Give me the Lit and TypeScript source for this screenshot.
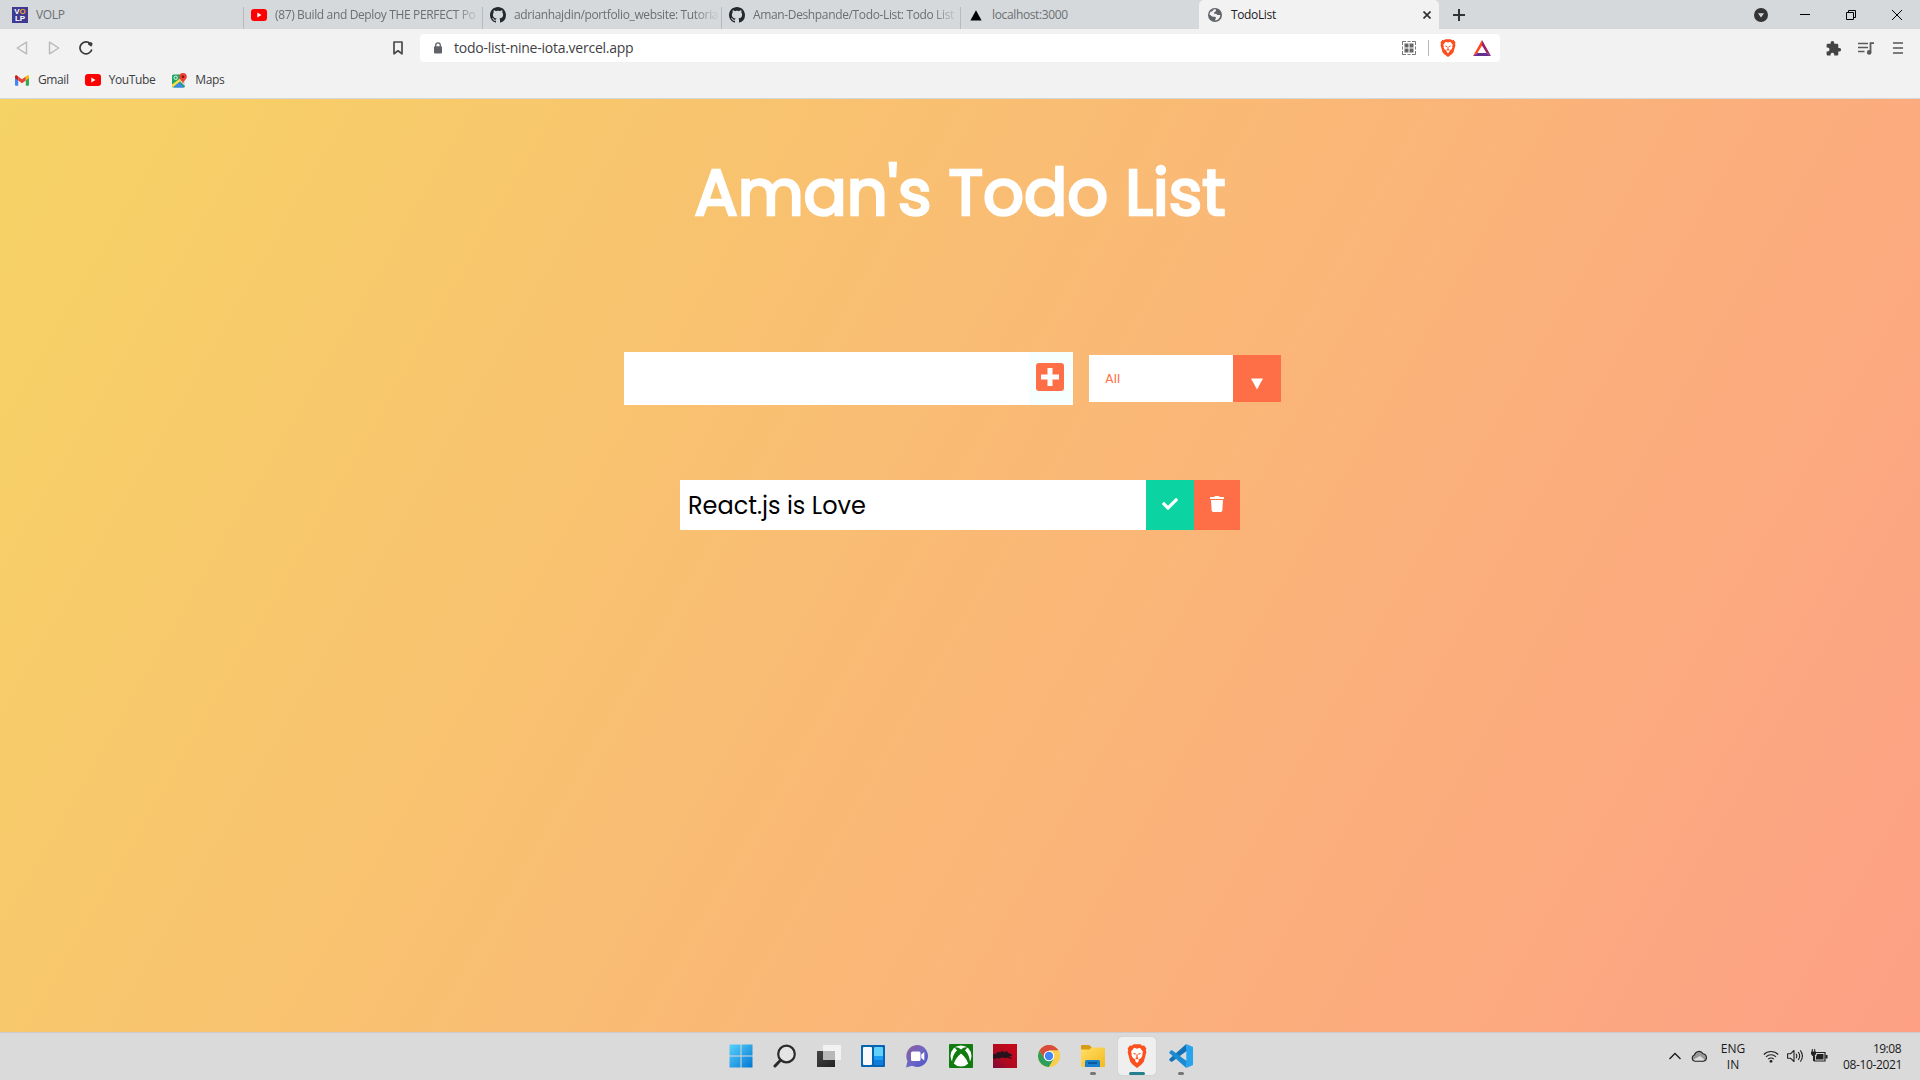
import { LitElement, html, css, svg } from "lit";
import { customElement } from "lit/decorators.js";

const youtube = html`<svg width="16" height="12" viewBox="0 0 16 12"><rect width="16" height="12" rx="3" fill="#f00"/><path d="M6.3 3.6v4.8l4.2-2.4z" fill="#fff"/></svg>`;
const github = html`<svg width="16" height="16" viewBox="0 0 16 16"><path fill="#24292e" d="M8 0C3.58 0 0 3.58 0 8c0 3.54 2.29 6.53 5.47 7.59.4.07.55-.17.55-.38 0-.19-.01-.82-.01-1.49-2.01.37-2.53-.49-2.69-.94-.09-.23-.48-.94-.82-1.13-.28-.15-.68-.52-.01-.53.63-.01 1.08.58 1.23.82.72 1.21 1.87.87 2.33.66.07-.52.28-.87.51-1.07-1.78-.2-3.64-.89-3.64-3.95 0-.87.31-1.59.82-2.15-.08-.2-.36-1.02.08-2.12 0 0 .67-.21 2.2.82.64-.18 1.32-.27 2-.27s1.36.09 2 .27c1.53-1.04 2.2-.82 2.2-.82.44 1.1.16 1.92.08 2.12.51.56.82 1.27.82 2.15 0 3.07-1.87 3.75-3.65 3.95.29.25.54.73.54 1.48 0 1.07-.01 1.93-.01 2.2 0 .21.15.46.55.38A8.01 8.01 0 0 0 16 8c0-4.42-3.58-8-8-8z"/></svg>`;
const volp = html`<span class="volp"><span>V<b>O</b></span><span>LP</span></span>`;
const vercel = html`<svg width="12" height="11" viewBox="0 0 12 11"><path d="M6 .3 11.6 10.6H.4z" fill="#000"/></svg>`;
const globe = html`<svg width="14" height="14" viewBox="0 0 14 14"><circle cx="7" cy="7" r="7" fill="#5f6368"/><path d="M7.600 1.300C8.500 2.200 8 3.200 7.200 3.800L6 4.600v1.200h2.200l1.300 1.300h2.800C12.300 10 10 12.400 7.200 12.600V11.200l1-1.200L7 8.700H4.600L1.500 6.600C1.700 3.800 4.200 1.300 7.600 1.300z" fill="#f2f2f2"/><path d="M2.600 4.200 4.500 3l1.300-1.500L3.600 2.300z" fill="#5f6368"/></svg>`;

const lionHead = svg`<path d="M5.200 1.200h5.600l1.200 1 1.700-.2 1.800 2.200-.5 1.200.5 1.300-2 6.700-1.700 2L8 18l-3.800-2.600-1.700-2L.5 6.700 1 5.400.500 4.200 2.300 2l1.700.2z" fill="#fb4f1f"/>
<path d="M8 4.300l2.300-.6 2.500 2.800-.6 1.500.2.900-1.100 2-2.100 1.100.3 1.100L8 14.500l-1.500-1.400.3-1.100-2.100-1.100-1.100-2 .2-.9-.6-1.500 2.500-2.800z" fill="#fff"/>
<path d="M4.500 7.200l2.600.5-.5 1.100zM11.500 7.200l-2.600.5.5 1.100zM7.500 8.300h1v2.200l1 .4L8 12l-1.500-1.100 1-.4z" fill="#fb4f1f"/>`;
const brave = (w: number, h: number) => html`<svg width=${w} height=${h} viewBox="0 1 16 17" preserveAspectRatio="none">${lionHead}</svg>`;

const gmail = html`<svg width="14" height="11" viewBox="0 0 14 11"><path d="M0 1.500V10a.8.8 0 0 0 .8.8h2.400V4.500z" fill="#4285f4"/><path d="M10.800 4.500v6.300h2.400A.8.8 0 0 0 14 10V1.500z" fill="#34a853"/><path d="M3.200 1.400v4L7 8.300l3.800-2.900v-4L7 4.200z" fill="#ea4335"/><path d="M0 1.500v1.600l3.200 2.400v-4l-.9-.8C1.300 0 0 .5 0 1.500z" fill="#c5221f"/><path d="M14 1.500v1.600l-3.200 2.400v-4l.9-.8c1-.7 2.300-.2 2.300.8z" fill="#fbbc04"/></svg>`;
const maps = html`<svg width="15" height="15" viewBox="0 0 15 15"><rect x="0" y="1.500" width="13" height="13" rx="1.500" fill="#1fa463"/><path d="M0 11.500V13l1 1.300L12.500 4.800V2z" fill="#fddb4c"/><path d="M8 8.600l5 4.500V5.500z" fill="#dadce0"/><path d="M1.600 14.500 7 9.500l5.200 5z" fill="#4285f4"/><circle cx="3.700" cy="4.800" r="1.700" fill="none" stroke="#fff" stroke-width=".9"/><path d="M11 0a3.800 3.800 0 0 0-3.800 3.800C7.200 6.500 10.300 7.200 11 11c.7-3.800 3.800-4.500 3.800-7.200A3.800 3.800 0 0 0 11 0z" fill="#ea4335"/><circle cx="11" cy="3.800" r="1.300" fill="#811411"/></svg>`;

const ic = (w: number, h: number, body: unknown) => html`<svg width=${w} height=${h} viewBox="0 0 ${w} ${h}" fill="none">${body}</svg>`;

@customElement("browser-chrome")
class BrowserChrome extends LitElement {
  static styles = css`
    :host { display: block; height: 99px; background: #f2f2f2; font: 12px/16px "Segoe UI", "Open Sans", "Noto Sans", sans-serif; color: #3c4043; box-sizing: border-box; border-bottom: 1px solid #d3d8db; }
    * { box-sizing: border-box; }
    svg { display: block; flex: none; }
    .tabs { display: flex; height: 29px; background: #d5d9dc; }
    .tab { display: flex; align-items: center; height: 29px; width: 239px; padding: 1px 4px 0 7px; color: #6c6f72; }
    .tab.first { width: 244px; padding-left: 12px; }
    .tab.plain { width: 238px; }
    .tab.line::after { content: ""; width: 1px; height: 22px; align-self: flex-end; background: #b7bbbe; margin-left: 1px; margin-right: -4px; flex: none; }
    .fav { width: 16px; display: flex; justify-content: center; margin-right: 8px; flex: none; }
    .label { flex: 1; white-space: nowrap; letter-spacing: -0.36px; }
    .fade { -webkit-mask-image: linear-gradient(to right, #000 calc(100% - 26px), transparent); mask-image: linear-gradient(to right, #000 calc(100% - 26px), transparent); }
    .tab.active { width: 240px; background: #f2f2f2; border-radius: 5px 5px 0 0; color: #202124; padding: 1px 8px 0; }
    .volp { width: 16px; height: 16px; background: #3d3a8f; color: #fff; font: bold 8px/7px "Liberation Sans", sans-serif; display: flex; flex-direction: column; align-items: center; padding-top: 1px; }
    .volp b { color: #f0a52c; }
    .plus { padding: 9px 0 0 14px; }
    .win { margin-left: auto; display: flex; align-items: center; padding-right: 18px; height: 29px; }
    .bar { display: flex; align-items: center; height: 38px; }
    .bar .nav { display: flex; align-items: center; padding: 0 0 0 16px; gap: 20px; width: 389px; }
    .reload { margin-left: -1px; }
    .url { display: flex; align-items: center; width: 1080px; height: 28px; margin: 0; background: #fff; border-radius: 4px; padding: 0 9px 0 13px; }
    .book { width: 31px; padding-left: 4px; }
    .address { font-size: 14px; margin-left: 11px; flex: 1; letter-spacing: -0.25px; color: #3f4145; }
    .div { width: 1px; height: 16px; background: #b5b5b5; margin: 0 11px 0 12px; }
    .tools { margin-left: auto; display: flex; align-items: center; padding-right: 17px; }
    .marks { display: flex; align-items: center; height: 26px; padding-left: 15px; }
    .mark { display: flex; align-items: center; letter-spacing: -0.38px; }
  `;
  render() {
    const tab = (icon: unknown, text: string, cls = "line", fade = false) => html`<div class="tab ${cls}"><span class="fav">${icon}</span><span class="label ${fade ? "fade" : ""}">${text}</span></div>`;
    return html`
      <div class="tabs">
        ${tab(volp, "VOLP", "first line")}
        ${tab(youtube, "(87) Build and Deploy THE PERFECT Po", "line", true)}
        ${tab(github, "adrianhajdin/portfolio_website: Tutoria", "line", true)}
        ${tab(github, "Aman-Deshpande/Todo-List: Todo List", "line", true)}
        ${tab(vercel, "localhost:3000", "plain")}
        <div class="tab active"><span class="fav">${globe}</span><span class="label">TodoList</span>${ic(8, 8, svg`<path d="M.5.5l7 7m0-7l-7 7" stroke="#333" stroke-width="1.700"/>`)}</div>
        <div class="plus">${ic(12, 12, svg`<path d="M6 0v12M0 6h12" stroke="#333" stroke-width="2"/>`)}</div>
        <div class="win">
          ${ic(14, 14, svg`<circle cx="7" cy="7" r="7" fill="#343434"/><path d="M4 5.200h6L7 9.500z" fill="#d5d9dc"/>`)}
          <span style="width:32px"></span>
          ${ic(10, 10, svg`<path d="M0 4.500h10" stroke="#000"/>`)}
          <span style="width:36px"></span>
          ${ic(10, 10, svg`<path d="M.5 2.500h7v7h-7zM2.500 2.500v-2h7v7h-2" stroke="#000"/>`)}
          <span style="width:36px"></span>
          ${ic(10, 10, svg`<path d="M0 0l10 10M10 0L0 10" stroke="#000"/>`)}
        </div>
      </div>
      <div class="bar">
        <div class="nav">
          ${ic(12, 14, svg`<path d="M10.500 1.200v11.600L1.200 7z" stroke="#b9b9b9" stroke-width="1.400" stroke-linejoin="round"/>`)}
          ${ic(12, 14, svg`<path d="M1.500 1.200v11.600L10.800 7z" stroke="#b9b9b9" stroke-width="1.400" stroke-linejoin="round"/>`)}
          <span class="reload">${ic(14, 14, svg`<path d="M11.200 2.600A6 6 0 1 0 12.800 8.500" stroke="#3b3b3b" stroke-width="1.700"/><path d="M8.800 1.300h3.600l1.300 1.500-1.300 3-3.100-2z" fill="#3b3b3b"/>`)}</span>
        </div>
        <div class="book">${ic(10, 14, svg`<path d="M1 1h8v11.800L5 9.800l-4 3z" stroke="#4a4a4a" stroke-width="1.700" stroke-linejoin="round"/>`)}</div>
        <div class="url">
          ${ic(10, 12, svg`<rect x="1" y="4.200" width="8" height="7.300" rx="1" fill="#5f6368"/><path d="M2.700 5V3.200a2.300 2.300 0 0 1 4.600 0V5" stroke="#5f6368" stroke-width="1.300"/>`)}
          <span class="address">todo-list-nine-iota.vercel.app</span>
          ${ic(14, 14, svg`<path d="M.5 4V.5H4M5.500.5h3M10 .5h3.500V4M13.500 5.500v3M13.500 10v3.500H10M8.500 13.500h-3M4 13.500H.5V10M.5 8.500v-3" stroke="#777"/><path d="M2.500 2.500h4v4h-4zM7.500 2.500h4v4h-4zM2.500 7.500h4v4h-4zM7.500 7.500h4v4h-4z" fill="#666"/>`)}
          <span class="div"></span>
          ${brave(16, 18)}
          <span style="width:17px"></span>
          ${ic(18, 16, svg`<path d="M9 0 0 16 4.500 13 9 5.500z" fill="#ff4724"/><path d="M9 0l9 16-4.500-3L9 5.500z" fill="#9e1f63"/><path d="M0 16h18l-4.500-3h-9z" fill="#662d91"/>`)}
        </div>
        <div class="tools">
          ${ic(15, 15, svg`<path d="M13.300 7h-1V4.100c0-.8-.6-1.400-1.400-1.400H8.200v-.9a1.800 1.800 0 0 0-3.600 0v.9H1.900C1.200 2.700.6 3.300.6 4.100v2.500h1a1.900 1.900 0 0 1 0 3.800h-1v2.800c0 .8.6 1.300 1.300 1.300h2.700v-1a1.800 1.800 0 0 1 3.600 0v1h2.700c.8 0 1.400-.6 1.400-1.300v-2.700h1a1.700 1.700 0 0 0 0-3.500z" fill="#444"/>`)}
          <span style="width:17px"></span>
          ${ic(16, 13, svg`<path d="M0 1.500h10M0 5.500h10M0 9.500h6.500" stroke="#5a5a5a" stroke-width="1.500"/><path d="M12.500 10V1.200H16" stroke="#5a5a5a" stroke-width="1.800"/><circle cx="11.200" cy="10.400" r="2.300" fill="#5a5a5a"/>`)}
          <span style="width:19px"></span>
          ${ic(10, 12, svg`<path d="M.5 1h9M.5 6h9M.5 11h9" stroke="#555" stroke-width="1.700" stroke-linecap="round"/>`)}
        </div>
      </div>
      <div class="marks">
        <span class="mark">${gmail}<span style="margin:0 16px 0 9px">Gmail</span></span>
        <span class="mark">${youtube}<span style="margin:0 17px 0 8px">YouTube</span></span>
        <span class="mark">${maps}<span style="margin-left:8px">Maps</span></span>
      </div>`;
  }
}

@customElement("todo-page")
class TodoPage extends LitElement {
  static styles = css`
    :host { display: flex; flex-direction: column; align-items: center; height: 933px; background: linear-gradient(120deg, #f6d365 0%, #fda085 100%); font-family: Poppins, Inter, sans-serif; box-sizing: border-box; }
    * { box-sizing: border-box; }
    svg { display: block; }
    h1 { margin: 54px 0 0; height: 80px; font-size: 64px; line-height: 80px; font-weight: 400; -webkit-text-stroke: 2.7px #fff; color: #fff; white-space: nowrap; }
    .form { display: flex; align-items: center; margin: 119px 0 0; width: 672px; height: 53px; }
    .field { display: flex; width: 449px; height: 53px; background: #fff; }
    .add { margin-left: auto; width: 44px; background: #f7fffe; padding: 11px 0 0 7px; }
    .select { display: flex; margin: 0 0 0 16px; width: 192px; height: 47px; background: #fff; color: #ff6f47; font-size: 13px; line-height: 47px; padding-left: 16px; font-weight: 400; }
    .arrow { margin-left: auto; width: 48px; background: #ff6f47; display: flex; justify-content: center; padding-top: 23px; }
    .todo { display: flex; width: 560px; height: 50px; margin-top: 75px; background: #fff; color: #000; }
    .text { flex: 1; font-size: 24px; line-height: 51px; padding-left: 8px; font-weight: 400; }
    .done, .trash { display: flex; justify-content: center; }
    .done { width: 48px; background: #0bd4a2; padding-top: 16px; }
    .trash { width: 46px; background: #ff6f47; padding-top: 16px; }
  `;
  render() {
    return html`
      <h1>Aman's Todo List</h1>
      <div class="form">
        <div class="field"><div class="add">${ic(28, 28, svg`<rect width="28" height="28" rx="3" fill="#ff6f47"/><path d="M14 5v18M5 14h18" stroke="#fff" stroke-width="5"/>`)}</div></div>
        <div class="select"><span>All</span><span class="arrow">${ic(12, 12, svg`<path d="M0 .5h12L6 11.500z" fill="#fff"/>`)}</span></div>
      </div>
      <div class="todo">
        <span class="text">React.js is Love</span>
        <span class="done">${html`<svg width="16" height="16" viewBox="0 0 512 512"><path fill="#fff" d="M173.898 439.404l-166.400-166.400c-9.997-9.997-9.997-26.206 0-36.204l36.203-36.204c9.997-9.998 26.207-9.998 36.204 0L192 312.690 432.095 72.596c9.997-9.997 26.207-9.997 36.204 0l36.203 36.204c9.997 9.997 9.997 26.206 0 36.204l-294.400 294.401c-9.998 9.997-26.207 9.997-36.204-.001z"/></svg>`}</span>
        <span class="trash">${html`<svg width="14" height="16" viewBox="0 0 448 512"><path fill="#fff" d="M432 32H312l-9.400-18.700A24 24 0 0 0 281.100 0H166.800a23.720 23.720 0 0 0-21.400 13.300L136 32H16A16 16 0 0 0 0 48v32a16 16 0 0 0 16 16h416a16 16 0 0 0 16-16V48a16 16 0 0 0-16-16zM53.200 467a48 48 0 0 0 47.900 45h245.800a48 48 0 0 0 47.900-45L416 128H32z"/></svg>`}</span>
      </div>`;
  }
}

@customElement("task-bar")
class TaskBar extends LitElement {
  static styles = css`
    :host { display: grid; grid-template-columns: 1fr auto 1fr; height: 48px; background: #dadada; border-top: 1px solid #cfcac7; font: 12px/16px "Segoe UI", "Open Sans", "Noto Sans", sans-serif; color: #1a1a1a; box-sizing: border-box; }
    * { box-sizing: border-box; }
    svg { display: block; flex: none; }
    .apps { grid-column: 2; display: flex; gap: 4px; padding-left: 2px; }
    .app { width: 40px; height: 46px; display: flex; align-items: center; justify-content: center; position: relative; }
    .app.on::before { content: ""; position: absolute; inset: 4px 1px; border-radius: 4px; background: #efefef; box-shadow: 0 0 1px #aaa; }
    .app svg { position: relative; }
    .app.run::after, .app.on::after { content: ""; position: absolute; left: 17px; bottom: 4px; width: 6px; height: 3px; border-radius: 2px; background: #777; }
    .app.on::after { left: 12px; width: 16px; background: #26808f; }
    .tray { display: flex; align-items: center; justify-content: flex-end; padding: 0 18px 1px 0; }
    .two { display: flex; flex-direction: column; white-space: nowrap; padding-top: 1px; }
    .lang { width: 28px; text-align: center; margin: 0 16px 0 12px; }
    .clock { text-align: right; margin-left: 16px; width: 58px; align-items: flex-end; letter-spacing: -0.35px; }
    .time { letter-spacing: -0.5px; padding-right: 1px; }
  `;
  render() {
    const icons: [unknown, string][] = [
      [svg`<defs><linearGradient id="w" x1="0" y1="0" x2="1" y2="1"><stop stop-color="#5ad1fb"/><stop offset="1" stop-color="#0277d4"/></linearGradient></defs><path d="M.5.5h11v11H.5zM12.500.5h11v11h-11zM.5 12.500h11v11H.5zM12.500 12.500h11v11h-11z" fill="url(#w)"/>`, ""],
      [svg`<circle cx="13.500" cy="10" r="8.300" stroke="#2b2b2b" stroke-width="2.200" fill="#e4e4e4"/><path d="M7.500 16.300 2 22" stroke="#2b2b2b" stroke-width="3" stroke-linecap="round"/>`, ""],
      [svg`<defs><linearGradient id="t" y2="1"><stop stop-color="#444"/><stop offset="1" stop-color="#222"/></linearGradient></defs><path d="M0 7h18v16H0z" fill="url(#t)"/><path d="M6 1h18v15H6z" fill="#f2f2f2"/><path d="M6 7h12v9H6z" fill="#b8b8b8"/>`, ""],
      [svg`<rect y="1" width="24" height="22" rx="1" fill="#0763b3"/><rect x="2" y="3" width="9" height="18" rx="1" fill="#f7f9fb"/><rect x="13" y="3" width="9" height="10" rx="1" fill="#63d2fb"/><rect x="13" y="13" width="9" height="8" fill="#0f7bdc"/><path d="M13 12h9v4h-9z" fill="#1b9df3"/>`, ""],
      [svg`<defs><linearGradient id="c" x2="1" y2="1"><stop stop-color="#925b95"/><stop offset=".5" stop-color="#6d67c4"/><stop offset="1" stop-color="#4b52c8"/></linearGradient></defs><path d="M12 1a11 11 0 1 1-5 20.800L1 23.500 2.500 17A11 11 0 0 1 12 1z" fill="url(#c)"/><rect x="6" y="7.500" width="9.500" height="9.500" rx="1.500" fill="#fff"/><path d="m16.300 10.500 3-2.500v8.500l-3-2.500z" fill="#fff"/>`, ""],
      [svg`<rect width="24" height="24" rx="1" fill="#107c10"/><circle cx="12" cy="12" r="10.500" fill="#fff"/><path d="M5.500 3.500Q9 2.800 12 5.400 15 2.800 18.500 3.500L16 6.200Q21 11 21 19.500l-1.500 1Q17.500 14 12 9.500 6.500 14 4.500 20.500L3 19.500Q3 11 8 6.200z" fill="#107c10"/>`, ""],
      [svg`<defs><linearGradient id="k" x1="1" y1="0" x2="0" y2="1"><stop stop-color="#c90818"/><stop offset=".6" stop-color="#b00a20"/><stop offset="1" stop-color="#7c0a3c"/></linearGradient></defs><path d="M0 0h24v24H0z" fill="url(#k)"/><path d="M0 10.500 4.500 9 3.500 8l5 .2L7.500 6.800l5 1.500 1-1.500 1.500 2 4 1.700-.3 1.500-3 .2 3 1.600-.5 1.200-3.200-1.300-3.300.2-3-.4-2 1-3-.4L2.500 15 0 14.500z" fill="#28131c"/>`, ""],
      [svg`<circle cx="12" cy="12" r="11" fill="#fbc934"/><path d="M2.500 6.500A11 11 0 0 1 21.500 6.500H12v11L7.200 14.700z" fill="#d94b3d"/><path d="M2.500 6.500A11 11 0 0 0 12 23l4.800-8.300L7.200 14.700z" fill="#2c9f5b"/><path d="M21.500 6.500A11 11 0 0 1 12 23l4.800-8.300-4.800-8.200z" fill="#f7cf50"/><circle cx="12" cy="12" r="5.300" fill="#fff"/><circle cx="12" cy="12" r="4.200" fill="#4285f4"/>`, ""],
      [svg`<defs><linearGradient id="f" x2="1" y2="1"><stop stop-color="#ffdf68"/><stop offset="1" stop-color="#f5b91d"/></linearGradient></defs><path d="M0 2q0-1 1-1h7l3 2.500L9 6H0z" fill="#d79c13"/><path d="M0 5.500h8.500l2-2H23q1 0 1 1V22q0 1-1 1H1q-1 0-1-1z" fill="url(#f)"/><path d="M4 23v-5.500q0-1.500 1.500-1.500h12q1.500 0 1.500 1.500V23z" fill="#1a7fcd"/><path d="M7 18h9v2H7z" fill="#0c5a9c"/>`, "run"],
      [svg`<svg x="2" y="0" width="20" height="24" viewBox="0 1 16 17" preserveAspectRatio="none">${lionHead}</svg>`, "on"],
      [svg`<path d="M17.300 0 18 6.700 2.700 18 .3 16.300V15z" fill="#1371b5"/><path d="M.3 9 .3 8 2.700 6 18 17.300 17.300 24z" fill="#1b8bd3"/><path d="M17.300 0 24 3v18l-6.700 3z" fill="#27a4ee"/>`, "run"],
    ];
    return html`
      <div class="apps">${icons.map(([b, c]) => html`<div class="app ${c}">${ic(24, 24, b)}</div>`)}</div>
      <div class="tray">
        ${ic(12, 8, svg`<path d="M.5 7 6 1.500 11.500 7" stroke="#1a1a1a" stroke-width="1.300"/>`)}
        <span style="width:10px"></span>
        ${ic(16, 12, svg`<path d="M4 11.300a3.300 3.300 0 0 1-.5-6.400A4.600 4.600 0 0 1 12 3.800a3.800 3.800 0 0 1 .4 7.500z" fill="#999" stroke="#222" stroke-width="1.100"/><path d="M2.500 9.500 9 6l4.500 3.500-1.500 1H4z" fill="#ddd"/>`)}
        <span class="two lang"><span>ENG</span><span>IN</span></span>
        ${ic(16, 13, svg`<path d="M.8 4.500a10.200 10.200 0 0 1 14.400 0M3 6.900a7 7 0 0 1 10 0M5.200 9.200a4 4 0 0 1 5.600 0" stroke="#222" stroke-width="1.100"/><circle cx="8" cy="11.300" r="1.400" fill="#222"/>`)}
        <span style="width:8px"></span>
        ${ic(17, 14, svg`<path d="M.6 4.800h2.800L7 1.500v11L3.400 9.200H.6zM9 4.800q1.600 2.200 0 4.400M11.200 3q3 4 0 8M13.300 1.300q4.300 5.700 0 11.400" stroke="#222" stroke-width="1.100" stroke-linejoin="round"/>`)}
        <span style="width:7px"></span>
        ${ic(17, 14, svg`<path d="M5 3.500h9v8.500H3.500V7" stroke="#222" stroke-width="1.200"/><path d="M6 5h6.500v5.500H5V8z" fill="#222"/><path d="M14.500 6h2v3.500h-2zM0 2.500h5V5L3.500 7h-2L0 5zM.8 0h1v3h-1zM3.200 0h1v3h-1zM2 6h1.200v6H2z" fill="#222"/>`)}
        <span class="two clock"><span class="time">19:08</span><span>08-10-2021</span></span>
      </div>`;
  }
}

@customElement("app-root")
class AppRoot extends LitElement {
  static styles = css`:host { display: block; width: 1920px; height: 1080px; overflow: hidden; }`;
  render() {
    return html`<browser-chrome></browser-chrome><todo-page></todo-page><task-bar></task-bar>`;
  }
}
